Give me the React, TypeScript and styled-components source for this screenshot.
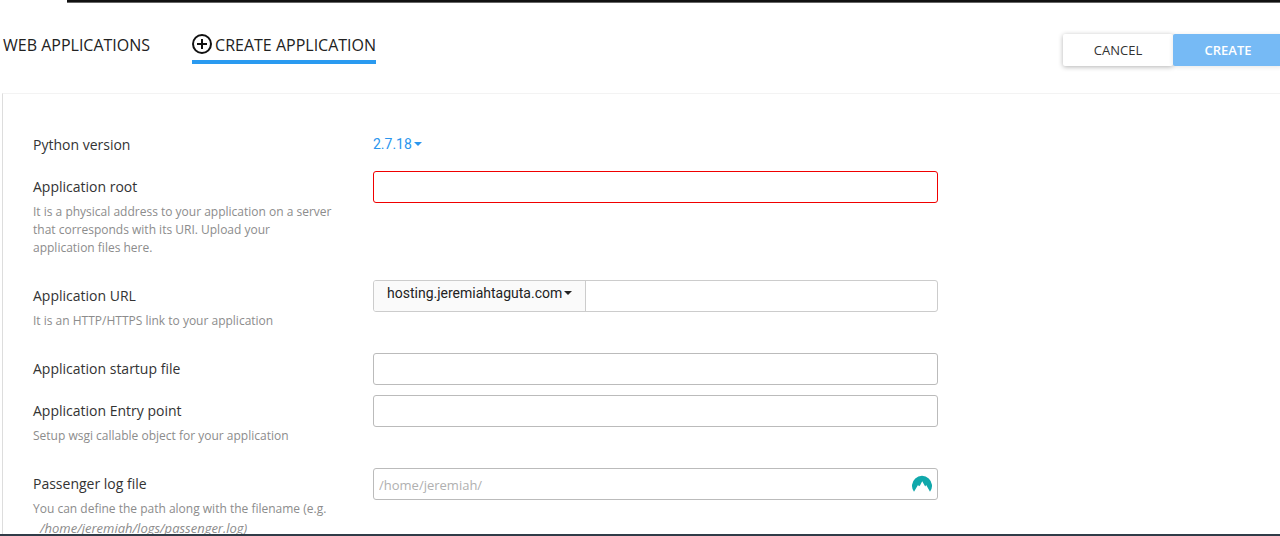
import React from "react";
import styled, { createGlobalStyle, css } from "styled-components";

const GlobalStyle = createGlobalStyle`
  *, *::before, *::after { box-sizing: border-box; }
  body {
    margin: 0;
    background: #fff;
    color: #333;
    font-family: "Open Sans", "Noto Sans", sans-serif;
    font-size: 14px;
  }
`;

const Page = styled.div`
  display: flex;
  flex-direction: column;
  height: 100vh;
  overflow: hidden;
`;

const TopStrip = styled.div`
  flex: none;
  height: 3px;
  margin-left: 67px;
  background: #111;
  border-bottom: 1px solid #666;
`;

const Header = styled.header`
  flex: none;
  display: flex;
  justify-content: space-between;
  align-items: flex-start;
  padding: 31px 0 27px 3px;
`;

const Tabs = styled.nav`
  display: flex;
  gap: 42px;
`;

const Tab = styled.a<{ $active?: boolean }>`
  display: flex;
  align-items: flex-start;
  gap: 3px;
  height: 30px;
  border-bottom: 4px solid ${(p) => (p.$active ? "#2a9af0" : "transparent")};
  color: #222;
  font-size: 16px;
  line-height: 22px;
  text-decoration: none;
  white-space: nowrap;
`;

const Actions = styled.div`
  display: flex;
  margin-right: -3px;
`;

const ActionButton = styled.button<{ $primary?: boolean }>`
  width: 110px;
  height: 32px;
  padding: 0;
  border: 0;
  border-radius: 2px;
  background: #fff;
  box-shadow: 0 1px 5px rgba(0, 0, 0, 0.3);
  color: #333;
  font: 400 13px "Open Sans", sans-serif;
  ${(p) =>
    p.$primary &&
    css`
      background: #76baf5;
      color: #fff;
      font-weight: 600;
      box-shadow: 0 1px 5px rgba(0, 0, 0, 0.1);
    `}
`;

const Card = styled.main`
  flex: 1;
  min-height: 0;
  overflow: hidden;
  margin-left: 2px;
  padding: 35px 30px 0;
  border-top: 1px solid #f3f3f3;
  border-left: 1px solid #ddd;
`;

const Form = styled.form`
  display: flex;
  flex-direction: column;
  gap: 10px;
`;

const Row = styled.div`
  display: grid;
  grid-template-columns: 300px minmax(0, 565px);
  column-gap: 40px;
  align-items: start;
`;

const Label = styled.label`
  display: block;
  line-height: 32px;
`;

const Help = styled.p`
  margin: 0 0 13px;
  color: #8c8c8c;
  font-size: 12px;
  line-height: 18px;
`;

const Path = styled.em`
  display: block;
  padding: 1px 7px;
  font-size: 13px;
`;

const field = css`
  width: 100%;
  height: 32px;
  border: 1px solid #bbb;
  border-radius: 3px;
  background: #fff;
`;

const TextInput = styled.input<{ $invalid?: boolean }>`
  ${field}
  padding: 2px 5px 0;
  outline: 0;
  color: #333;
  font: 13px "Open Sans", sans-serif;
  ${(p) => p.$invalid && "border-color: #f00000;"}
  &::placeholder { color: #b0b0b0; }
`;

const InputGroup = styled.div`
  ${field}
  display: flex;
  border-color: #ccc;
  overflow: hidden;
`;

const GroupInput = styled.input`
  flex: 1;
  min-width: 0;
  padding: 0 5px;
  border: 0;
  outline: 0;
  background: transparent;
`;

const Picker = styled.span<{ $addon?: boolean }>`
  display: flex;
  align-items: center;
  gap: 2px;
  height: 30px;
  color: #2a96ee;
  ${(p) =>
    p.$addon &&
    css`
      gap: 1px;
      padding: 0 13px 6px;
      border-right: 1px solid #ccc;
      background: #fafafa;
      color: #222;
    `}
`;

const Select = styled.select`
  appearance: none;
  height: 20px;
  padding: 0;
  border: 0;
  outline: 0;
  background: transparent;
  color: inherit;
  font: 14px Roboto, sans-serif;
`;

const IconField = styled.div`
  position: relative;
`;

const FieldIcon = styled.svg`
  position: absolute;
  top: 7px;
  right: 6px;
`;

const BottomStrip = styled.div`
  flex: none;
  height: 2px;
  background: #303c48;
`;

const PlusCircle = () => (
  <svg width="20" height="20" viewBox="0 0 20 20" fill="none" stroke="#111" strokeWidth="2" aria-hidden="true">
    <circle cx="10" cy="10" r="9" />
    <path d="M10 5v10M5 10h10" />
  </svg>
);

const Caret = () => (
  <svg width="8" height="4" viewBox="0 0 8 4" fill="currentColor" aria-hidden="true">
    <path d="M0 0h8L4 4z" />
  </svg>
);

export default function App() {
  return (
    <>
      <GlobalStyle />
      <Page>
        <TopStrip />
        <Header>
          <Tabs>
            <Tab href="#applications">WEB APPLICATIONS</Tab>
            <Tab href="#create" $active>
              <PlusCircle />
              CREATE APPLICATION
            </Tab>
          </Tabs>
          <Actions>
            <ActionButton type="button">CANCEL</ActionButton>
            <ActionButton type="submit" form="create-app" $primary>CREATE</ActionButton>
          </Actions>
        </Header>
        <Card>
          <Form id="create-app">
            <Row>
              <Label htmlFor="version">Python version</Label>
              <Picker>
                <Select id="version">
                  <option>2.7.18</option>
                </Select>
                <Caret />
              </Picker>
            </Row>
            <Row>
              <div>
                <Label htmlFor="root-dir">Application root</Label>
                <Help>
                  It is a physical address to your application on a server that corresponds with its URI. Upload your
                  application files here.
                </Help>
              </div>
              <TextInput id="root-dir" $invalid />
            </Row>
            <Row>
              <div>
                <Label htmlFor="url">Application URL</Label>
                <Help>It is an HTTP/HTTPS link to your application</Help>
              </div>
              <InputGroup>
                <Picker $addon>
                  <Select aria-label="Domain">
                    <option>hosting.jeremiahtaguta.com</option>
                  </Select>
                  <Caret />
                </Picker>
                <GroupInput id="url" />
              </InputGroup>
            </Row>
            <Row>
              <Label htmlFor="startup">Application startup file</Label>
              <TextInput id="startup" />
            </Row>
            <Row>
              <div>
                <Label htmlFor="entry">Application Entry point</Label>
                <Help>Setup wsgi callable object for your application</Help>
              </div>
              <TextInput id="entry" />
            </Row>
            <Row>
              <div>
                <Label htmlFor="log">Passenger log file</Label>
                <Help>
                  You can define the path along with the filename (e.g.
                  <Path>/home/jeremiah/logs/passenger.log)</Path>
                </Help>
              </div>
              <IconField>
                <TextInput id="log" placeholder="/home/jeremiah/" />
                <FieldIcon width="20" height="18" viewBox="0 0 20 18" fill="#10a8ab" aria-hidden="true">
                  <path d="M2 16.8A10 10 0 1 1 18 16.8L14.2 10 13.2 11.4 10.2 6.2 8 10.4 7 11.2 6 10z" />
                </FieldIcon>
              </IconField>
            </Row>
          </Form>
        </Card>
        <BottomStrip />
      </Page>
    </>
  );
}
